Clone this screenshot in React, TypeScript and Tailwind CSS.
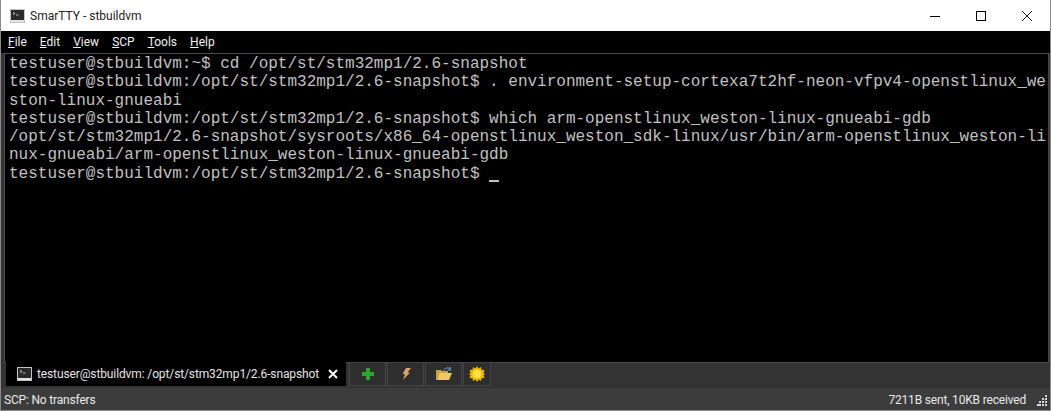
const lines = [
  "testuser@stbuildvm:~$ cd /opt/st/stm32mp1/2.6-snapshot",
  "testuser@stbuildvm:/opt/st/stm32mp1/2.6-snapshot$ . environment-setup-cortexa7t2hf-neon-vfpv4-openstlinux_we",
  "ston-linux-gnueabi",
  "testuser@stbuildvm:/opt/st/stm32mp1/2.6-snapshot$ which arm-openstlinux_weston-linux-gnueabi-gdb",
  "/opt/st/stm32mp1/2.6-snapshot/sysroots/x86_64-openstlinux_weston_sdk-linux/usr/bin/arm-openstlinux_weston-li",
  "nux-gnueabi/arm-openstlinux_weston-linux-gnueabi-gdb",
];

const menus = [
  ["F", "ile"],
  ["E", "dit"],
  ["V", "iew"],
  ["S", "CP"],
  ["T", "ools"],
  ["H", "elp"],
];

const TermIcon = () => (
  <svg width="15" height="14" viewBox="0 0 15 14" className="shrink-0">
    <rect width="15" height="14" fill="#c4c4c4" />
    <rect x="1" y="1" width="13" height="10" fill="#2a2a2a" />
    <rect x="1" y="11" width="13" height="2" fill="#e4e4e4" />
    <path d="M3 3.500l2 1-2 1M6 6h2.500" stroke="#e0e0e0" strokeWidth="0.8" fill="none" />
  </svg>
);

const ToolButton = ({ wide, children }: { wide?: boolean; children: React.ReactNode }) => (
  <div
    className={`${wide ? "w-[37px]" : "w-[28px]"} h-[24px] flex items-center justify-center border border-[#454545] bg-[#2e2e2e]`}
  >
    {children}
  </div>
);

const Grip = () => (
  <svg width="11" height="11" viewBox="0 0 11 11" className="shrink-0">
    {[
      [8, 0],
      [5, 3],
      [8, 3],
      [2, 6],
      [5, 6],
      [8, 6],
      [0, 9],
      [2, 9],
      [5, 9],
      [8, 9],
    ].map(([x, y]) => (
      <rect key={`${x}-${y}`} x={x} y={y} width="2" height="2" fill="#d8d8d8" />
    ))}
  </svg>
);

const App = () => {
  return (
    <div className="w-[1051px] h-[411px] flex flex-col bg-[#333333] border-r border-b border-l border-[#8a8a8a] font-['Roboto',sans-serif] overflow-hidden">
      {/* Title bar */}
      <div className="h-[31px] bg-white flex items-center shrink-0">
        <div className="ml-[9px] mr-[5px]">
          <TermIcon />
        </div>
        <span className="text-[12px] text-[#222]">SmarTTY - stbuildvm</span>
        <div className="ml-auto flex items-center text-black">
          <div className="w-[46px] flex justify-center">
            <svg width="10" height="10" viewBox="0 0 10 10">
              <path d="M0 5.500h10" stroke="#000" />
            </svg>
          </div>
          <div className="w-[46px] flex justify-center">
            <svg width="10" height="10" viewBox="0 0 10 10">
              <rect x="0.500" y="0.500" width="9" height="9" fill="none" stroke="#000" />
            </svg>
          </div>
          <div className="w-[46px] flex justify-center">
            <svg width="10" height="10" viewBox="0 0 10 10">
              <path d="M0 0l10 10M10 0L0 10" stroke="#000" strokeWidth="0.900" />
            </svg>
          </div>
        </div>
      </div>

      {/* Menu */}
      <div className="h-[22px] bg-black flex items-center gap-[13px] pl-[7px] text-[12px] text-[#f0f0f0] shrink-0">
        {menus.map(([key, rest]) => (
          <span key={key}>
            <span className="underline">{key}</span>
            {rest}
          </span>
        ))}
      </div>

      {/* Terminal */}
      <div className="flex-1 ml-[3px] mr-[1px] bg-black border-t border-l border-r border-[#4a4a4a] pl-[4px] pt-[1px] font-['Liberation_Mono',monospace] text-[16px] leading-[18.3px] text-[#c0c0c0] whitespace-pre overflow-hidden">
        {lines.map((line) => (
          <div key={line}>{line}</div>
        ))}
        <div className="flex">
          <span>testuser@stbuildvm:/opt/st/stm32mp1/2.6-snapshot$ </span>
          <span className="w-[10px] h-[2px] bg-[#c0c0c0] mt-[15px]" />
        </div>
      </div>

      {/* Tabs */}
      <div className="h-[26px] ml-[3px] mr-[1px] bg-[#333333] border-t border-[#4a4a4a] flex shrink-0">
        <div className="w-[340px] ml-[2px] h-[24px] -mt-px bg-black flex items-center text-[12px] tracking-[-0.12px] text-[#e4e4e4] whitespace-nowrap">
          <div className="ml-[11px] mr-[5px]">
            <TermIcon />
          </div>
          <span>testuser@stbuildvm: /opt/st/stm32mp1/2.6-snapshot</span>
          <svg width="10" height="10" viewBox="0 0 10 10" className="ml-auto mr-[8px]">
            <path d="M1 1l8 8M9 1L1 9" stroke="#fff" strokeWidth="2" />
          </svg>
        </div>
        <div className="flex gap-[1px] ml-[3px] -mt-px">
          <ToolButton wide>
            <svg width="16" height="16" viewBox="0 0 16 16">
              <path d="M6 2.500Q6 2 6.500 2h3q.5 0 .5.500V6h3.500q.5 0 .5.500v3q0 .5-.5.500H10v3.500q0 .5-.5.500h-3q-.5 0-.5-.500V10H2.500Q2 10 2 9.500v-3q0-.5.500-.5H6z" fill="#2fa52f" />
            </svg>
          </ToolButton>
          <ToolButton wide>
            <svg width="12" height="14" viewBox="0 0 12 14">
              <path d="M6 1h5L7.500 5.500H10L3 13l2-6H2.500z" fill="#e0a56a" />
            </svg>
          </ToolButton>
          <ToolButton wide>
            <svg width="18" height="16" viewBox="0 0 18 16">
              <path d="M1 4h5l1 1h6v2H5L3 14H1z" fill="#c9a14a" />
              <path d="M4.500 7H17l-3 7H2.500z" fill="#f0c860" />
              <path d="M9 4.500c1-2.500 3.500-3.500 6-2M15.500 1v3h-3" stroke="#5a7fa8" strokeWidth="1.300" fill="none" />
            </svg>
          </ToolButton>
          <ToolButton>
            <svg width="16" height="16" viewBox="0 0 16 16">
              <path d="M8 0l1.500 2.500L12 1l.5 2.800L15.500 4l-1 2.700L16 8l-1.500 1.300 1 2.700-3 .2L12 15l-2.500-1.500L8 16l-1.500-2.500L4 15l-.5-2.800-3-.2 1-2.700L0 8l1.500-1.300-1-2.700 3-.2L4 1l2.500 1.500z" fill="#f0b400" />
              <circle cx="8" cy="8" r="4.500" fill="#ffe23a" />
            </svg>
          </ToolButton>
        </div>
      </div>

      {/* Status bar */}
      <div className="flex-none h-[22px] bg-[#3c3c3c] flex items-center text-[12px] tracking-[-0.18px] text-[#e8e8e8] pl-[3px] pt-[2px]">
        <span>SCP: No transfers</span>
        <span className="ml-auto mr-[11px]">7211B sent, 10KB received</span>
        <Grip />
        <div className="w-[2px]" />
      </div>
    </div>
  );
};

export default App;
